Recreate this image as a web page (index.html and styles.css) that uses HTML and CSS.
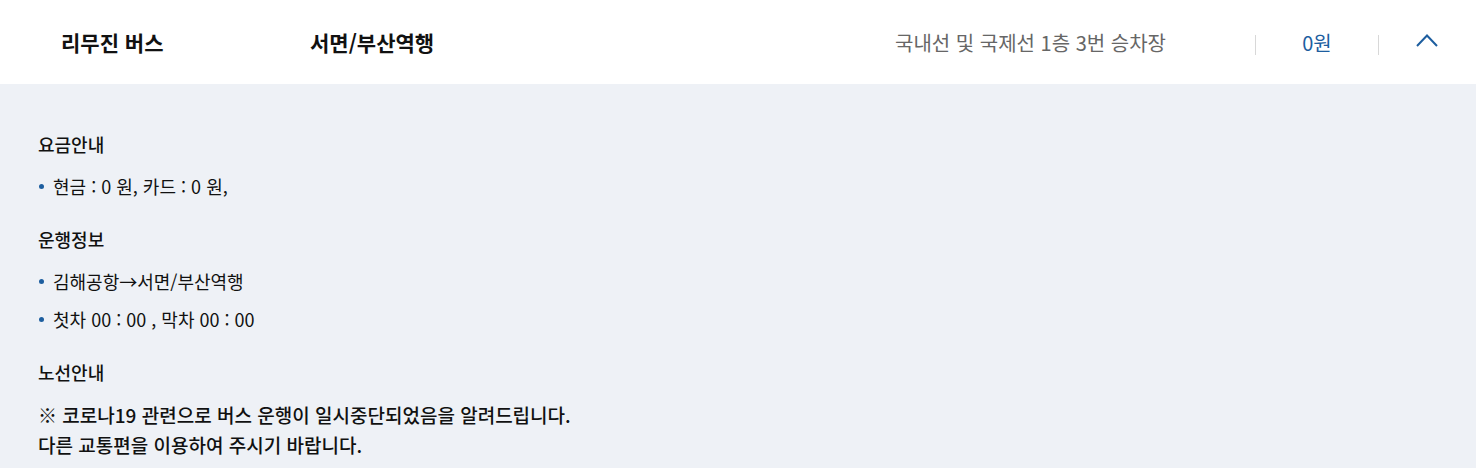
FILE: index.html
```html
<!DOCTYPE html>
<html lang="ko">
<head>
  <meta charset="UTF-8" />
  <meta name="viewport" content="width=device-width, initial-scale=1.0"/>
  <title>리무진 버스</title>
  <link rel="stylesheet" href="styles.css">
</head>
<body>
  <div class="bus-item">
    <div class="bus-head">
      <div class="bus-type">리무진 버스</div>
      <div class="bus-dest">서면/부산역행</div>
      <div class="bus-stop">국내선 및 국제선 1층 3번 승차장</div>
      <div class="bar"></div>
      <div class="bus-fare">0원</div>
      <div class="bar"></div>
      <button class="toggle" aria-label="접기">
        <svg width="22" height="14" viewBox="0 0 22 14">
          <path d="M1 13 L11 2.5 L21 13" fill="none" stroke="#1d5e9f" stroke-width="2"/>
        </svg>
      </button>
    </div>

    <div class="bus-body">
      <h3>요금안내</h3>
      <ul>
        <li>현금 : 0 원, 카드 : 0 원,</li>
      </ul>

      <h3>운행정보</h3>
      <ul>
        <li>김해공항→서면/부산역행</li>
        <li>첫차 00 : 00 , 막차 00 : 00</li>
      </ul>

      <h3>노선안내</h3>
      <p class="notice">※ 코로나19 관련으로 버스 운행이 일시중단되었음을 알려드립니다.<br>다른 교통편을 이용하여 주시기 바랍니다.</p>
    </div>
  </div>
</body>
</html>
```

FILE: styles.css
```css
body {
  margin: 0;
  font-family: "Noto Sans CJK KR", "Noto Sans", sans-serif;
  color: #111;
  background: #eef1f6;
}

.bus-head {
  display: flex;
  align-items: center;
  height: 84px;
  background: #fff;
  padding: 0 38px 0 61px;
}

.bus-type {
  width: 249px;
  font-size: 21px;
  font-weight: 700;
}

.bus-dest {
  flex: 1;
  font-size: 21px;
  font-weight: 700;
}

.bus-stop {
  font-size: 20px;
  color: #666;
  margin-right: 89px;
}

.bar {
  width: 1px;
  height: 20px;
  background: #d8d8d8;
  margin-top: 5px;
}

.bus-fare {
  width: 122px;
  text-align: center;
  font-size: 20px;
  color: #1d5e9f;
}

.toggle {
  border: none;
  background: none;
  padding: 0;
  margin-left: 37px;
  width: 22px;
  height: 14px;
  cursor: pointer;
  margin-bottom: 4px;
}

.toggle svg {
  display: block;
}

.bus-body {
  padding: 48px 38px 10px;
}

h3 {
  margin: 0;
  font-size: 18px;
  font-weight: 500;
  line-height: 24px;
}

ul {
  list-style: none;
  margin: 18px 0 29px;
  padding: 0;
}

li {
  position: relative;
  padding-left: 15px;
  font-size: 18px;
  line-height: 24px;
  margin-top: 14px;
}

li:first-child {
  margin-top: 0;
}

li::before {
  content: "";
  position: absolute;
  left: 1px;
  top: 10px;
  width: 5px;
  height: 5px;
  border-radius: 50%;
  background: #1d5e9f;
}

.notice {
  margin: 16px 0 0;
  font-size: 19px;
  font-weight: 500;
  line-height: 30px;
}
```
